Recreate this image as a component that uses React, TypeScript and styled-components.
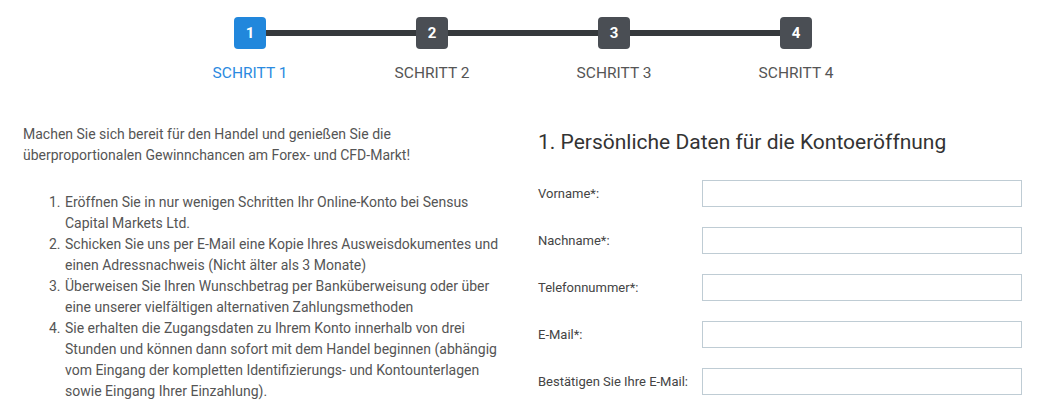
import React from "react";
import styled, { createGlobalStyle } from "styled-components";

const Global = createGlobalStyle`
  html, body { margin: 0; padding: 0; background: #fff; }
  body { font-family: Roboto, "Liberation Sans", Arial, sans-serif; color: #555; }
  * { box-sizing: border-box; }
`;

const Page = styled.div`
  width: 1039px;
  height: 408px;
  overflow: hidden;
`;

const Stepper = styled.div`
  display: flex;
  justify-content: flex-start;
  padding: 17px 0 0 159px;
`;

const Track = styled.div`
  position: relative;
  display: flex;
  &::before {
    content: "";
    position: absolute;
    left: 91px;
    right: 91px;
    top: 13px;
    height: 6px;
    background: #35393c;
    border-radius: 1px;
  }
`;

const Step = styled.div`
  position: relative;
  width: 182px;
  display: flex;
  flex-direction: column;
  align-items: center;
`;

const StepBox = styled.div<{ $active?: boolean }>`
  width: 32px;
  height: 32px;
  border-radius: 4px;
  background: ${(p) => (p.$active ? "#2187dc" : "#4a4e54")};
  color: #fff;
  font-weight: 700;
  font-size: 15px;
  display: flex;
  align-items: center;
  justify-content: center;
`;

const StepLabel = styled.div<{ $active?: boolean }>`
  margin-top: 15px;
  font-size: 15.5px;
  line-height: 18px;
  color: ${(p) => (p.$active ? "#2b8ae0" : "#555")};
  text-transform: uppercase;
`;

const Content = styled.div`
  display: flex;
  padding: 42px 17px 0 23px;
  gap: 33px;
`;

const Left = styled.div`
  width: 482px;
  font-size: 14px;
  line-height: 21px;
  color: #555;
`;

const Intro = styled.p`
  margin: 0 0 26px;
`;

const Steps = styled.ol`
  margin: 0;
  padding-left: 41px;
  li { padding-left: 1px; }
`;

const Right = styled.div`
  flex: 1;
  padding-top: 5px;
`;

const Heading = styled.h2`
  margin: 0 0 25px;
  font-size: 21px;
  line-height: 26px;
  font-weight: 400;
  color: #333;
`;

const Row = styled.div`
  display: flex;
  align-items: center;
  height: 27px;
  margin-bottom: 20px;
`;

const Label = styled.label`
  width: 164px;
  font-size: 13px;
  color: #444;
`;

const Input = styled.input`
  width: 320px;
  height: 27px;
  border: 1px solid #bfccd4;
  border-radius: 0;
  padding: 0 8px;
  outline: none;
`;

const steps = ["Schritt 1", "Schritt 2", "Schritt 3", "Schritt 4"];
const fields = ["Vorname*:", "Nachname*:", "Telefonnummer*:", "E-Mail*:", "Bestätigen Sie Ihre E-Mail:"];

export default function App() {
  return (
    <Page>
      <Global />
      <Stepper>
        <Track>
          {steps.map((s, i) => (
            <Step key={s}>
              <StepBox $active={i === 0}>{i + 1}</StepBox>
              <StepLabel $active={i === 0}>{s}</StepLabel>
            </Step>
          ))}
        </Track>
      </Stepper>
      <Content>
        <Left>
          <Intro>
            Machen Sie sich bereit für den Handel und genießen Sie die überproportionalen Gewinnchancen am Forex- und CFD-Markt!
          </Intro>
          <Steps>
            <li>Eröffnen Sie in nur wenigen Schritten Ihr Online-Konto bei Sensus Capital Markets Ltd.</li>
            <li>Schicken Sie uns per E-Mail eine Kopie Ihres Ausweisdokumentes und einen Adressnachweis (Nicht älter als 3 Monate)</li>
            <li>Überweisen Sie Ihren Wunschbetrag per Banküberweisung oder über eine unserer vielfältigen alternativen Zahlungsmethoden</li>
            <li>Sie erhalten die Zugangsdaten zu Ihrem Konto innerhalb von drei Stunden und können dann sofort mit dem Handel beginnen (abhängig vom Eingang der kompletten Identifizierungs- und Kontounterlagen sowie Eingang Ihrer Einzahlung).</li>
          </Steps>
        </Left>
        <Right>
          <Heading>1. Persönliche Daten für die Kontoeröffnung</Heading>
          {fields.map((f) => (
            <Row key={f}>
              <Label>{f}</Label>
              <Input type="text" />
            </Row>
          ))}
        </Right>
      </Content>
    </Page>
  );
}
